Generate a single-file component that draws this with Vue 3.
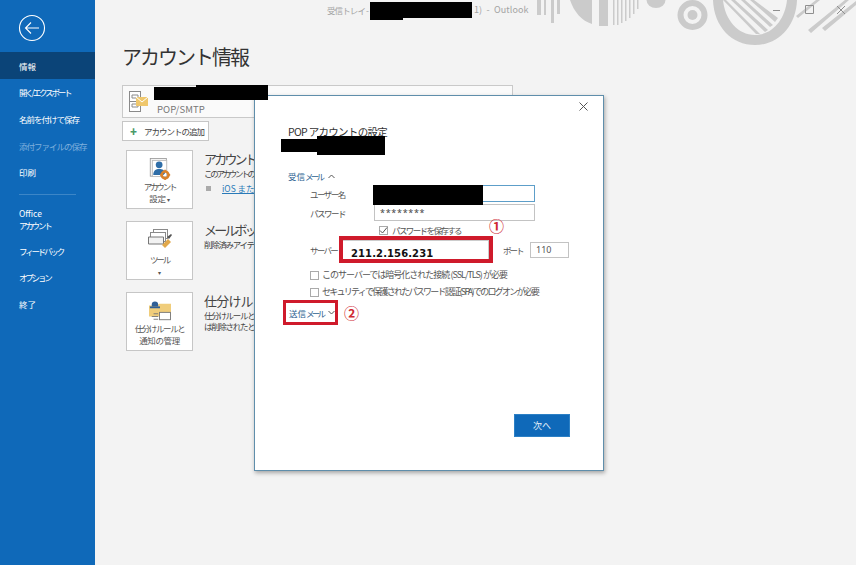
<script setup>
const navItems = [
  { label: '情報', active: true },
  { label: '開く/エクスポート', fit: 'kana' },
  { label: '名前を付けて保存', fit: 'mix' },
  { label: '添付ファイルの保存', fit: 'mix', disabled: true },
  { label: '印刷' },
]
const navLower = [
  { label: 'フィードバック', fit: 'kana' },
  { label: 'オプション', fit: 'kana' },
  { label: '終了' },
]
</script>

<template>
  <div class="page">
    <aside class="side">
      <div class="back">
        <svg width="28" height="28" viewBox="0 0 28 28" fill="none" stroke="#fff" stroke-width="1.1">
          <circle cx="14" cy="14" r="12.5" />
          <path d="M7.5 14H21M13 8.5 7.5 14l5.5 5.5" />
        </svg>
      </div>
      <nav class="nav">
        <div v-for="i in navItems" :key="i.label" class="nav-item" :class="[i.fit, { active: i.active, disabled: i.disabled }]">{{ i.label }}</div>
      </nav>
      <div class="nav-rule"></div>
      <nav class="nav">
        <div class="nav-item tall"><span>Office</span><span class="kana">アカウント</span></div>
        <div v-for="i in navLower" :key="i.label" class="nav-item" :class="i.fit">{{ i.label }}</div>
      </nav>
    </aside>

    <main class="main">
      <header class="titlebar">
        <span class="wintitle">受信トレイ -</span>
        <span class="wintitle-right">1)&nbsp; -&nbsp; Outlook</span>
      </header>
      <svg class="deco" width="320" height="50" viewBox="536 0 320 50" fill="#cbcbcb">
        <path d="M537 0h4v15h-4zM544 0h2v15h-2zM551 0h3v23h-3zM557 0h3v14h-3z" />
        <path d="M570 0h22v24c-10-3-18-12-22-24zM599 0h9v26h-9zM613 0h1.500v25H613zM617 0h1.500v25H617zM621 0h1.500v23H621zM625 0h1.500v21H625zM629 0h1.500v18H629zM633 0h1.500v14H633zM637 0h1.500v9H637z" />
        <path d="M646.500 0h19a9.500 8 0 0 1-19 0z" />
        <path fill-rule="evenodd" d="M677.500 15a15 15 0 1 0 30 0 15 15 0 1 0-30 0zM683.500 15a9 9 0 1 1 18 0 9 9 0 1 1-18 0z" />
        <circle cx="692.500" cy="15" r="5" />
        <path d="M713 0h10c2 20 15 35 32 35s30-15 32-35h10c-1 27-19 45-42 45s-41-18-42-45z" />
        <path d="M723 0h3l34 34h-4zM731 0h4l33 30-3 2zM741 0h4l28 25-3 2zM750 0h4l24 18-3 4z" />
        <path d="m808 30 37-30h4l-38 33zM822 28l34-27v4l-31 26zM796 16 816 0h4l-22 18z" />
      </svg>
      <div class="winctl">
        <svg width="72" height="14" viewBox="0 0 72 14" fill="none" stroke="#8f8f8f"><path d="M0 7.500h7M32.500 2.500h8v8h-8zM64 3l8 8M72 3l-8 8" /></svg>
      </div>

      <div class="content">
        <h1 class="title">アカウント情報</h1>
        <div class="account">
          <svg width="20" height="22" viewBox="0 0 20 22">
            <rect x=".5" y=".5" width="11" height="20" fill="#fff" stroke="#8a8a8a" />
            <path d="M1 10.500h10M3 4h6v3H3zM3 13h6v3H3z" fill="none" stroke="#8a8a8a" />
            <rect x="7" y="6" width="12" height="9" fill="#efc76c" />
            <path d="m7 6 6 5 6-5" fill="none" stroke="#fff" />
          </svg>
          <div class="account-type">POP/SMTP</div>
        </div>
        <button class="add"><span class="plus">✚</span>アカウントの追加</button>

        <section class="tile-row">
          <div class="tile">
            <svg width="22" height="22" viewBox="0 0 24 26">
              <rect x=".5" y=".5" width="19" height="21" fill="#f4f4f4" stroke="#9a9a9a" />
              <rect x="3" y="3" width="17" height="19" fill="#fff" stroke="#bbb" />
              <circle cx="11" cy="8" r="4" fill="#2f6ea8" />
              <path d="M4 20c0-5 3-7 7-7s6 1 7 5l-2 2z" fill="#2f6ea8" />
              <circle cx="18" cy="20" r="4" fill="none" stroke="#d9822b" stroke-width="3" />
              <path d="M18 14v2M18 24v2M12 20h2M22 20h2" stroke="#d9822b" stroke-width="2" />
            </svg>
            <span class="tile-label kana">アカウント</span>
            <span class="tile-label">設定 <small>▾</small></span>
          </div>
          <div class="tile-copy">
            <h2>アカウント</h2>
            <p>このアカウントの</p>
            <p class="link-row"><i></i><a>iOS また</a></p>
          </div>
        </section>

        <section class="tile-row">
          <div class="tile">
            <svg width="24" height="22" viewBox="0 0 24 22">
              <rect x="5.500" y=".5" width="14" height="9" fill="#fff" stroke="#8a8a8a" />
              <rect x="2.500" y="3.500" width="15" height="9" fill="#fff" stroke="#8a8a8a" />
              <path d="M.5 8h15M.5 8v7h15V8" fill="#f2f2f2" stroke="#777" />
              <path d="m14 16 6-6 3 3-6 6z" fill="#e1a84b" />
              <path d="m19 8 4-3 1 1-3 4z" fill="#555" />
            </svg>
            <span class="tile-label tool kana">ツール</span>
            <span class="tile-label"><small>▾</small></span>
          </div>
          <div class="tile-copy">
            <h2>メールボッ</h2>
            <p class="wide">削除済みアイテ</p>
          </div>
        </section>

        <section class="tile-row">
          <div class="tile">
            <svg width="24" height="22" viewBox="0 0 26 24">
              <path d="M1 6h9l2-2h13v14H1z" fill="#f0cd7b" />
              <path d="M4 5a3.500 3.500 0 0 1 7 0v2H4z" fill="#2f5f96" />
              <rect x="2" y="7" width="11" height="2" fill="#2f5f96" />
              <rect x="12.500" y="13.500" width="12" height="8" fill="#fff" stroke="#777" />
              <path d="M6 15h5M4 18h7M6 21h5" stroke="#777" />
            </svg>
            <span class="tile-label mix">仕分けルールと</span>
            <span class="tile-label">通知の管理</span>
          </div>
          <div class="tile-copy">
            <h2 class="wide">仕分けル</h2>
            <p class="wide">仕分けルールと</p>
            <p class="wide">は削除されたと</p>
          </div>
        </section>
      </div>
    </main>

    <div class="dialog">
      <div class="close">
        <svg width="9" height="9" viewBox="0 0 9 9" stroke="#555" fill="none"><path d="m.5.5 8 8M8.500.5l-8 8" /></svg>
      </div>
      <h3 class="dlg-title">POP アカウントの設定</h3>
      <div class="section-link first"><span>受信<b>メール</b></span><svg class="chev" width="7" height="5" viewBox="0 0 7 5"><path d="m.5 4 3-3 3 3" /></svg></div>

      <div class="field user">
        <label>ユーザー名</label>
        <div class="input focus"></div>
      </div>
      <div class="field pass">
        <label>パスワード</label>
        <div class="input stars">********</div>
      </div>
      <div class="check save"><i class="box checked"><svg width="9" height="9" viewBox="0 0 9 9" fill="none" stroke="#555"><path d="m1 4.500 2.500 2.500L8 1.500" /></svg></i><span>パスワードを保存する</span></div>
      <div class="server-row">
        <label>サーバー</label>
        <div class="server-input">211.2.156.231</div>
        <label class="port-label">ポート</label>
        <div class="port">110</div>
      </div>
      <div class="check opt a"><i class="box"></i><span>このサーバーでは暗号化された接続 (SSL/TLS) が必要</span></div>
      <div class="check opt b"><i class="box"></i><span>セキュリティで保護されたパスワード認証 (SPA) でのログオンが必要</span></div>
      <div class="send-row">
        <div class="section-link send"><span>送信<b>メール</b></span><svg class="chev" width="7" height="5" viewBox="0 0 7 5"><path d="m.5 1 3 3 3-3" /></svg></div>
        <span class="mark two">②</span>
      </div>
      <div class="footer"><button class="next">次へ</button></div>

      <span class="mark one">①</span>
      <div class="ink ink-d1"></div>
      <div class="ink ink-d2"></div>
      <div class="ink ink-u"></div>
    </div>

    <div class="ink ink-a1"></div>
    <div class="ink ink-a2"></div>
    <div class="ink ink-t"></div>
    <div class="ink ink-t2"></div>
  </div>
</template>

<style>
html, body { margin: 0; background: #f3f3f3; }
</style>

<style scoped>
* { box-sizing: border-box; }
.page {
  position: relative;
  display: flex;
  width: 856px;
  height: 565px;
  overflow: hidden;
  background: #f3f3f3;
  font-family: "Noto Sans CJK JP", "Noto Sans", sans-serif;
  color: #444;
}
.side {
  width: 95px;
  flex: none;
  background: #0f69b9;
  color: #fff;
  font-size: 8.500px;
}
.back { height: 52px; padding: 14px 0 0 18px; }
.back svg { display: block; }
.nav-item {
  height: 26.600px;
  display: flex;
  align-items: center;
  padding: 1px 0 0 19px;
  line-height: 12px;
  white-space: nowrap;
}
.nav-item.kana, .nav-item .kana { letter-spacing: -2.200px; }
.nav-item.mix { letter-spacing: -1px; }
.nav-item.active { background: #0b4478; }
.nav-item.disabled { color: #7fb0dd; }
.nav-item.tall { height: 38px; flex-direction: column; align-items: flex-start; justify-content: center; padding-top: 3px; }
.nav-rule { height: 1px; background: #3c86c7; margin: 9px 19px 4px; }
.main { position: relative; flex: 1; min-width: 0; }
.titlebar { position: relative; height: 20px; color: #a3a3a3; font-size: 8.500px; line-height: 14px; }
.wintitle { position: absolute; left: 232px; top: 3px; letter-spacing: -.9px; white-space: nowrap; }
.wintitle-right { position: absolute; left: 379px; top: 3px; white-space: nowrap; font-size: 9px; letter-spacing: .1px; }
.deco { position: absolute; right: 0; top: 0; }
.winctl { position: absolute; left: 678px; top: 3px; }
.winctl svg { display: block; }
.content { padding: 22px 0 0 27px; position: relative; }
.title { margin: 0 0 13px; font-size: 20px; line-height: 30px; font-weight: 400; color: #333; letter-spacing: -2px; }
.account {
  width: 391px;
  height: 33px;
  display: flex;
  align-items: center;
  padding-left: 6px;
  background: #fafafa;
  border: 1px solid #c9c9c9;
}
.account-type { margin: 14px 0 0 8px; font-size: 9.500px; color: #777; letter-spacing: .1px; }
.add {
  display: flex;
  align-items: center;
  width: 87px;
  height: 20px;
  margin: 3px 0 9px;
  padding: 0 0 0 7px;
  background: #fff;
  border: 1px solid #c6c6c6;
  font: 8.500px "Noto Sans CJK JP", sans-serif;
  color: #444;
  letter-spacing: -1px;
  white-space: nowrap;
}
.plus { color: #4b9a6a; font-size: 7px; margin-right: 7px; letter-spacing: 0; }
.tile-row { display: flex; height: 71px; padding-left: 4px; }
.tile {
  width: 67px;
  height: 59px;
  flex: none;
  display: flex;
  flex-direction: column;
  align-items: center;
  padding-top: 7px;
  background: #fff;
  border: 1px solid #c6c6c6;
  color: #555;
}
.tile svg { flex: none; }
.tile-label { font-size: 8.500px; line-height: 12px; white-space: nowrap; letter-spacing: -.4px; }
.tile-label.kana { letter-spacing: -2.200px; }
.tile-label.mix { letter-spacing: -1.400px; }
.tile-label.tool { margin-top: 2px; }
.tile-label small { font-size: 6px; }
.tile-copy { margin-left: 11px; overflow: hidden; width: 50px; }
.tile-copy h2 { margin: 0; font-size: 13px; line-height: 18px; font-weight: 400; color: #444; white-space: nowrap; letter-spacing: -2.800px; }
.tile-copy h2.wide { letter-spacing: -.8px; }
.tile-copy p { margin: 0; font-size: 8.500px; line-height: 11px; color: #444; white-space: nowrap; letter-spacing: -2.300px; }
.tile-copy p.wide { letter-spacing: -1.300px; }
.tile-copy .link-row { display: flex; align-items: center; gap: 11px; padding-left: 2px; margin-top: 4px; letter-spacing: 0; }
.link-row i { width: 5px; height: 5px; background: #aaa; flex: none; }
.link-row a { color: #2a7ab8; text-decoration: underline; }
.ink { position: absolute; background: #000; }
.ink-a1 { left: 154px; top: 87px; width: 42px; height: 13px; }
.ink-a2 { left: 196px; top: 85px; width: 72px; height: 15px; }
.ink-t { left: 370px; top: 2px; width: 102px; height: 16px; }
.ink-t2 { left: 370px; top: 18px; width: 33px; height: 2px; }

.dialog {
  position: absolute;
  left: 254px;
  top: 95px;
  width: 350px;
  height: 376px;
  background: #fff;
  border: 1px solid #5f8eab;
  box-shadow: 1px 2px 4px rgba(70, 70, 70, .45);
  padding: 29px 33px 0 33px;
  font-size: 9px;
  color: #555;
}
.close { position: absolute; right: 15px; top: 6px; }
.close svg { display: block; }
.dlg-title { margin: 0; font-size: 10.500px; line-height: 14px; font-weight: 400; color: #333; letter-spacing: -.7px; }
.section-link { color: #2c5f90; font-size: 8.500px; line-height: 12px; display: flex; align-items: center; gap: 6px; white-space: nowrap; }
.section-link b { font-weight: 400; letter-spacing: -2.700px; }
.section-link.first { margin-top: 31px; }
.chev { fill: none; stroke: #555; stroke-width: 1; flex: none; }
.field { display: flex; align-items: center; margin-left: 22px; }
.field label { width: 64px; flex: none; font-size: 8.500px; letter-spacing: -1.500px; white-space: nowrap; }
.user { margin-top: 2px; height: 19px; }
.pass { margin-top: 1px; height: 17px; }
.input { width: 161px; height: 17px; background: #fff; border: 1px solid #c3c3c3; }
.input.focus { border-color: #5d9ec9; }
.stars { padding-left: 5px; font: 9px/15px "Noto Sans", sans-serif; letter-spacing: .7px; color: #444; }
.check { display: flex; align-items: center; gap: 3px; line-height: 12px; white-space: nowrap; }
.box { width: 9px; height: 9px; flex: none; display: block; background: #fff; border: 1px solid #aaa; margin-right: 1px; }
.box svg { display: block; margin: -1px; }
.save { margin: 3px 0 0 91px; height: 12px; font-size: 8.500px; letter-spacing: -1.600px; }
.server-row { display: flex; align-items: center; height: 27px; margin-top: 0; margin-left: 22px; }
.server-row label { width: 29px; flex: none; font-size: 8.500px; letter-spacing: -1.700px; white-space: nowrap; }
.server-input {
  width: 154px;
  height: 27px;
  flex: none;
  border: 4px solid #cf1a2b;
  padding: 6px 0 0 8px;
  background: #fff;
  box-shadow: inset -1px 1px 0 #ccc;
  font: 700 10px/16px "DejaVu Sans", sans-serif;
  color: #111;
  letter-spacing: .1px;
}
.server-row .port-label { width: 27px; margin-left: 10px; letter-spacing: -2px; }
.port { width: 39px; height: 16px; border: 1px solid #c3c3c3; padding-left: 5px; font: 9px/14px "Noto Sans", sans-serif; }
.opt { margin-left: 22px; height: 12px; gap: 2px; }
.opt.a { margin-top: 6px; letter-spacing: -1px; }
.opt.b { margin-top: 5px; letter-spacing: -1.750px; }
.send-row { display: flex; align-items: center; gap: 6px; margin: 2px 0 0 -5px; height: 25px; }
.send { width: 55px; height: 25px; border: 3px solid #cf1a2b; padding: 0 0 0 3px; gap: 5px; }
.mark { color: #cf2a33; font-size: 15px; line-height: 16px; font-weight: 700; }
.one { position: absolute; left: 234px; top: 122px; }
.footer { display: flex; justify-content: flex-end; margin-top: 89px; }
.next {
  width: 56px;
  height: 23px;
  background: #0f69b9;
  border: 1px solid #2c80c5;
  color: #e5f1fb;
  font: 9px "Noto Sans CJK JP", sans-serif;
}
.ink-d1 { left: 26px; top: 43px; width: 36px; height: 13px; }
.ink-d2 { left: 62px; top: 40px; width: 68px; height: 19px; }
.ink-u { left: 118px; top: 89px; width: 110px; height: 20px; }
</style>
